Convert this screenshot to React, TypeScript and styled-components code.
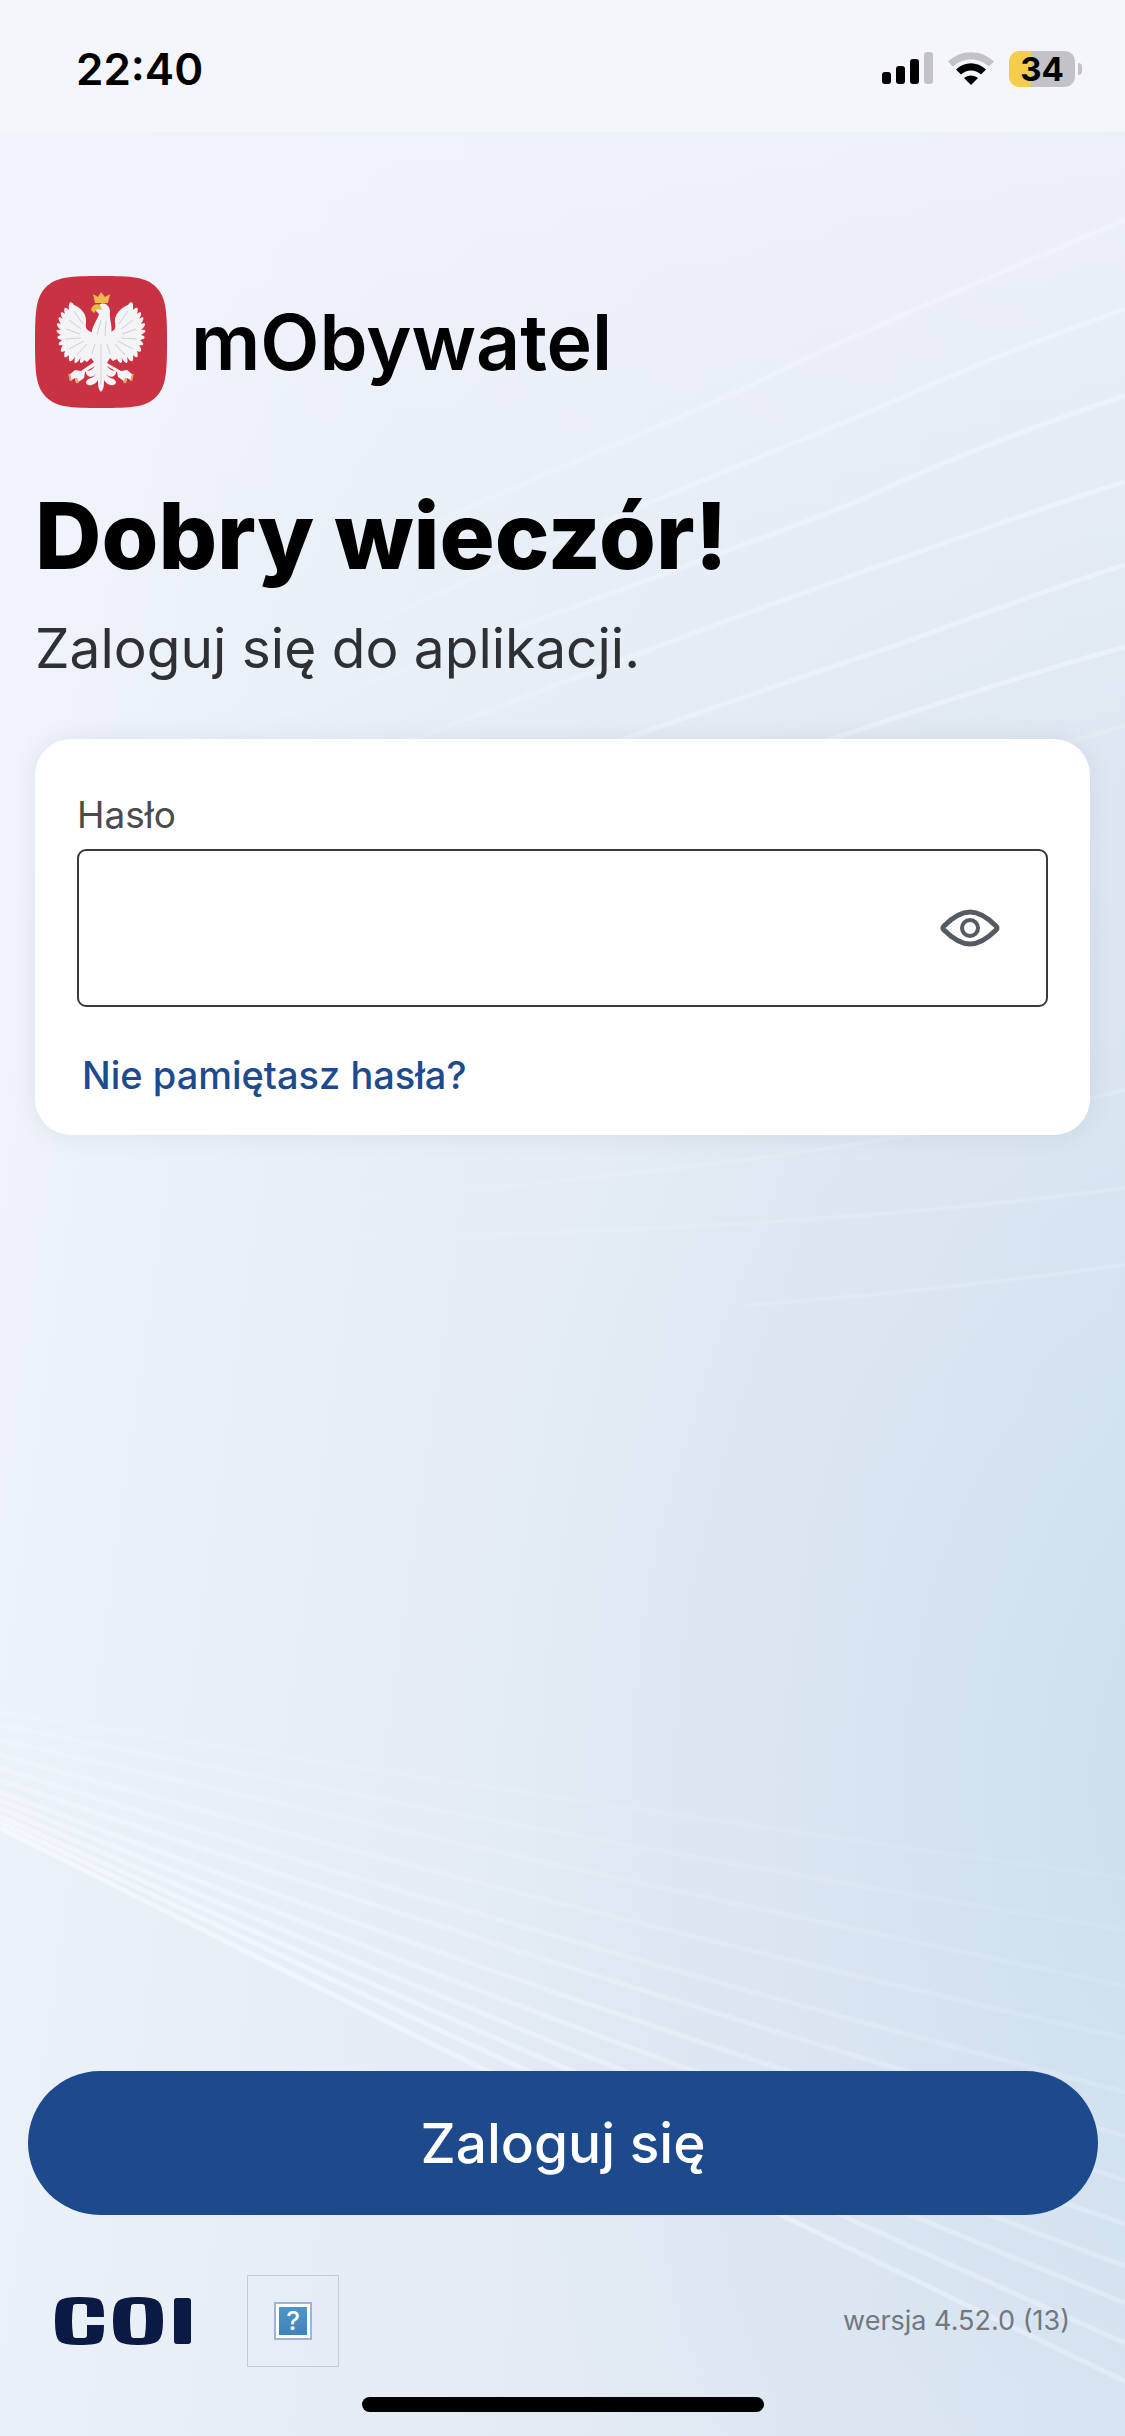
import React, { useState } from "react";
import styled, { createGlobalStyle } from "styled-components";

const GlobalStyle = createGlobalStyle`
  *, *::before, *::after { box-sizing: border-box; }
  html, body { margin: 0; padding: 0; }
  body {
    font-family: Inter, "Noto Sans", sans-serif;
    color: #000;
    -webkit-font-smoothing: antialiased;
  }
`;

const Screen = styled.div`
  position: relative;
  isolation: isolate;
  display: flex;
  flex-direction: column;
  min-height: 100vh;
  overflow: hidden;
  background:
    linear-gradient(180deg, rgba(240, 243, 251, 0.8) 5%, rgba(240, 243, 251, 0) 30%),
    radial-gradient(ellipse 76% 46% at 114% 73%, rgba(198, 219, 236, 0.85) 0%, rgba(206, 223, 238, 0.45) 50%, rgba(222, 232, 243, 0) 100%),
    linear-gradient(98deg, #f2f5fd 0%, #e9f0f8 28%, #e3eaf4 65%, #dce7f2 100%);
`;

const Backdrop = styled.svg`
  position: absolute;
  inset: 0;
  z-index: -1;
  width: 100%;
  height: 100%;
`;

const StatusBar = styled.header`
  display: flex;
  align-items: center;
  justify-content: space-between;
  height: 132px;
  padding: 6px 43px 0 76px;
  background: #f5f6fb;
`;

const Clock = styled.time`
  font-size: 44px;
  line-height: 52px;
  font-weight: 600;
`;

const Indicators = styled.div`
  display: flex;
  align-items: center;
  gap: 15px;
`;

const Battery = styled.div`
  display: flex;
  align-items: center;
  gap: 3px;
`;

const BatteryBody = styled.div<{ $level: number }>`
  width: 66px;
  height: 36px;
  border-radius: 10px;
  background: ${(p) => `linear-gradient(90deg, #f3cd4b ${p.$level}%, #c3c2c8 ${p.$level}%)`};
  font-size: 33px;
  line-height: 36px;
  font-weight: 700;
  text-align: center;
`;

const BatteryTip = styled.div`
  width: 4px;
  height: 12px;
  border-radius: 0 4px 4px 0;
  background: #c3c2c8;
`;

const Content = styled.main`
  display: flex;
  flex: 1;
  flex-direction: column;
  padding: 144px 35px 0;
`;

const Brand = styled.div`
  display: flex;
  align-items: center;
  gap: 24px;
`;

const BrandName = styled.span`
  font-size: 77px;
  line-height: 80px;
  font-weight: 600;
`;

const Greeting = styled.h1`
  margin: 72px 0 0;
  font-size: 92px;
  line-height: 112px;
  font-weight: 800;
`;

const Lead = styled.p`
  margin: 20px 0 0;
  color: #2f3033;
  font-size: 55px;
  line-height: 72px;
`;

const Card = styled.form`
  display: flex;
  flex-direction: column;
  align-items: flex-start;
  margin-top: 55px;
  padding: 54px 42px 38px;
  border-radius: 36px;
  background: #fff;
  box-shadow: 0 0 24px rgba(90, 90, 100, 0.1);
`;

const Label = styled.label`
  color: #4b4b4d;
  font-size: 37px;
  line-height: 44px;
`;

const Field = styled.div`
  display: flex;
  align-items: center;
  width: 100%;
  height: 158px;
  margin-top: 12px;
  padding: 0 40px 0 30px;
  border: 2px solid #3a3a3d;
  border-radius: 9px;
`;

const PasswordInput = styled.input`
  flex: 1;
  min-width: 0;
  height: 100%;
  padding: 0;
  border: 0;
  outline: 0;
  background: transparent;
  font: inherit;
  font-size: 44px;
`;

const IconButton = styled.button`
  display: flex;
  padding: 6px;
  border: 0;
  background: transparent;
  color: #555a63;
`;

const TextLink = styled.a`
  margin: 46px 0 0 5px;
  color: #1e4a8e;
  font-size: 38px;
  line-height: 44px;
  font-weight: 500;
  text-decoration: none;
`;

const Actions = styled.div`
  display: flex;
  padding: 0 27px 0 28px;
`;

const PrimaryButton = styled.button`
  flex: 1;
  height: 144px;
  border: 0;
  border-radius: 72px;
  background: #1d4a8d;
  color: #fff;
  font-family: inherit;
  font-size: 55px;
  font-weight: 500;
`;

const Footer = styled.footer`
  display: flex;
  align-items: center;
  gap: 56px;
  padding: 60px 55px 0;
`;

const MissingImage = styled.div`
  display: grid;
  place-items: center;
  width: 92px;
  height: 92px;
  border: 1px solid #c6cad6;
`;

const MissingGlyph = styled.span`
  width: 38px;
  height: 38px;
  border: 2px solid #9fb4d4;
  background: linear-gradient(#5099c8, #3f7fba);
  box-shadow: inset 0 0 0 3px #fff;
  color: #fff;
  font-size: 26px;
  line-height: 34px;
  font-weight: 500;
  text-align: center;
`;

const Version = styled.span`
  margin-left: auto;
  color: #74777e;
  font-size: 27px;
  line-height: 36px;
`;

const HomeIndicator = styled.div`
  align-self: center;
  width: 402px;
  height: 15px;
  margin: 30px 0 24px;
  border-radius: 8px;
  background: #000;
`;

const upperLines = [
  "M1125 220C1000 272 820 350 755 383S560 464 380 548",
  "M1125 309C1020 346 940 380 892 402S600 519 380 620",
  "M1125 396C1020 430 920 472 869 496S620 588 160 760",
  "M1125 482C1010 518 880 566 823 586S620 660 400 745",
  "M1125 565C1040 592 950 626 908 641S720 704 600 748",
  "M1125 647C1020 676 930 706 800 750",
];

const cardLines = [
  "M1125 726C1080 738 1060 745 1000 765",
  "M1125 1090C900 1150 600 1180 200 1215",
  "M1125 1188C900 1218 650 1232 359 1238",
  "M1125 1265C1000 1282 880 1296 746 1305",
];

// [left edge, middle, right edge] heights of every strand in the fan
const strands = [
  [1828, 2108, 2381],
  [1822, 2087, 2343],
  [1816, 2067, 2303],
  [1808, 2046, 2266],
  [1800, 2022, 2224],
  [1792, 1995, 2180],
  [1780, 1965, 2136],
  [1768, 1938, 2092],
  [1755, 1904, 2038],
  [1740, 1866, 1986],
  [1725, 1833, 1930],
  [1712, 1798, 1878],
];

function BackdropArt() {
  return (
    <Backdrop viewBox="0 0 1125 2436" preserveAspectRatio="none" fill="none" aria-hidden="true">
      <defs>
        <linearGradient id="fadeLeft" gradientUnits="userSpaceOnUse" x1="200" y1="0" x2="1125" y2="0">
          <stop offset="0" stopColor="#f3f8ff" stopOpacity="0" />
          <stop offset="0.5" stopColor="#f3f8ff" stopOpacity="0.4" />
          <stop offset="1" stopColor="#f3f8ff" stopOpacity="0.5" />
        </linearGradient>
        <linearGradient id="fadeRight" gradientUnits="userSpaceOnUse" x1="0" y1="0" x2="1125" y2="0">
          <stop offset="0" stopColor="#f7fafd" stopOpacity="0.8" />
          <stop offset="0.5" stopColor="#f0f6fe" stopOpacity="0.65" />
          <stop offset="1" stopColor="#edf4fc" stopOpacity="0.45" />
        </linearGradient>
      </defs>
      {upperLines.map((d) => (
        <path key={d} d={d} stroke="url(#fadeLeft)" strokeWidth="5" />
      ))}
      {cardLines.map((d) => (
        <path key={d} d={d} stroke="url(#fadeLeft)" strokeWidth="4" opacity="0.4" />
      ))}
      {strands.map(([a, b, c], i) => (
        <path
          key={a}
          d={`M0 ${a}Q562 ${2 * b - (a + c) / 2} 1125 ${c}`}
          stroke="url(#fadeRight)"
          strokeWidth="5"
          opacity={1 - i * 0.075}
        />
      ))}
    </Backdrop>
  );
}

function SignalIcon() {
  return (
    <svg width="51" height="34" viewBox="0 0 51 34" aria-label="Zasięg">
      <rect x="0" y="20" width="9" height="12" rx="3" />
      <rect x="14" y="14" width="9" height="18" rx="3" />
      <rect x="28" y="7" width="9" height="25" rx="3" />
      <rect x="42" y="0" width="9" height="32" rx="3" fill="#c3c2c8" />
    </svg>
  );
}

function WifiIcon() {
  return (
    <svg width="46" height="34" viewBox="0 0 46 34" aria-label="Wi-Fi">
      <path d="M0 9.500C13-3 33-3 46 9.500L41 14.500C31 5 15 5 5 14.500Z" fill="#c3c2c8" />
      <path d="M8 17.500C17 9 29 9 38 17.500L33 22.500C27 17 19 17 13 22.500Z" />
      <path d="M16 26C20 22.500 26 22.500 30 26L23 33Z" />
    </svg>
  );
}

function EagleLogo() {
  return (
    <svg width="132" height="132" viewBox="0 0 132 132" role="img" aria-label="Godło Polski">
      <path d="M66 0C97 0 111 1 121 11C131 21 132 35 132 66C132 97 131 111 121 121C111 131 97 132 66 132C35 132 21 131 11 121C1 111 0 97 0 66C0 35 1 21 11 11C21 1 35 0 66 0Z" fill="#c83243" />
      <g fill="#f4f4f6">
        <path d="M58 67L50 83C47 89 43 88 46 81C42 88 38 90 40 81C36 87 33 87 34 79C30 83 28 82 30 75C26 77 24 75 28 69C23 70 22 68 27 64C21 63 21 60 26 59C20 56 20 53 26 54C20 49 21 46 26 48C22 42 23 39 28 43C24 37 26 34 30 38C28 31 30 30 34 34C33 26 36 24 39 29C47 32 52 39 51 47C50 53 52 55 60 57Z" />
        <path d="M74 67L82 83C85 89 89 88 86 81C90 88 94 90 92 81C96 87 99 87 98 79C102 83 104 82 102 75C106 77 108 75 104 69C109 70 110 68 105 64C111 63 111 60 106 59C112 56 112 53 106 54C112 49 111 46 106 48C110 42 109 39 104 43C108 37 106 34 102 38C104 31 102 30 98 34C99 26 96 24 93 29C85 32 79 39 80 47C81 53 80 55 72 57Z" />
        <path d="M61 35C62 25 74 25 75 35C74 44 78 49 76 60L82 83L78 85L75 82L72 87L86 95L92 94L98 99L97 105L92 102L91 107L86 103L83 101L82 96L72 90C75 94 79 96 81 94C82 101 75 103 71 98C74 104 81 101 81 107C78 112 71 108 69 104C69 109 69 113 66 116C63 113 63 109 63 104C61 108 54 112 51 107C51 101 58 104 61 98C57 103 50 101 51 94C53 96 57 94 60 90L50 96L49 102L45 105L41 107L40 102L35 105L34 99L40 94L46 95L59 86L56 82L52 86L49 84L57 62C55 52 62 45 64 38Z" />
      </g>
      <path d="M39 35L48 48M34 44L46 53M31 53L45 58M30 63L46 62M34 73L49 65M42 79L52 68M93 35L84 48M98 44L86 53M101 53L87 58M102 63L86 62M98 73L83 65M90 79L80 68M66 68V109M60 68L57 78M72 68L75 78M66 44L62 59M71 45L70 60" stroke="#cfd0d8" strokeWidth="1" fill="none" />
      <path d="M58 18L63 21L66 16L70 21L75 18L73 27H60Z" fill="#efb84c" />
      <path d="M56 34C57 29 61 27 65 29L67 34L62 33L59 37Z" fill="#edb949" />
      <path d="M34 98L36 105M41 102L43 107M98 98L96 105M91 102L89 107" stroke="#e0a060" strokeWidth="2" />
    </svg>
  );
}

function EyeIcon() {
  return (
    <svg width="60" height="38" viewBox="0 0 60 38" fill="none" stroke="currentColor" strokeWidth="5" aria-hidden="true">
      <path d="M4 17C13 8 21 3 30 3S47 8 56 17Q58 19 56 21C47 30 39 35 30 35S13 30 4 21Q2 19 4 17Z" />
      <circle cx="30" cy="19" r="8" strokeWidth="4" />
    </svg>
  );
}

function CoiLogo() {
  return (
    <svg width="136" height="48" viewBox="0 0 136 48" fill="#0b1a45" fillRule="evenodd" role="img" aria-label="COI">
      <path d="M49 20H32V10Q32 7 29 7H21Q18 7 18 10Q16 24 18 38Q18 41 21 41H29Q32 41 32 38V28H49Q49 42 45 45Q42 48 24 48Q8 48 4 44Q0 40 0 24Q0 8 4 4Q8 0 24 0Q42 0 45 3Q49 6 49 20Z" />
      <path d="M83 0Q98 0 103 4Q108 8 108 24Q108 40 103 44Q98 48 83 48Q68 48 63 44Q58 40 58 24Q58 8 63 4Q68 0 83 0ZM79 7Q76 7 76 10Q74 24 76 38Q76 41 79 41H87Q90 41 90 38Q92 24 90 10Q90 7 87 7Z" />
      <rect x="119" y="1" width="17" height="46" rx="3" />
    </svg>
  );
}

export default function App() {
  const [visible, setVisible] = useState(false);
  return (
    <Screen>
      <GlobalStyle />
      <BackdropArt />
      <StatusBar>
        <Clock>22:40</Clock>
        <Indicators>
          <SignalIcon />
          <WifiIcon />
          <Battery>
            <BatteryBody $level={34}>34</BatteryBody>
            <BatteryTip />
          </Battery>
        </Indicators>
      </StatusBar>
      <Content>
        <Brand>
          <EagleLogo />
          <BrandName>mObywatel</BrandName>
        </Brand>
        <Greeting>Dobry wieczór!</Greeting>
        <Lead>Zaloguj się do aplikacji.</Lead>
        <Card onSubmit={(e) => e.preventDefault()}>
          <Label htmlFor="password">Hasło</Label>
          <Field>
            <PasswordInput id="password" type={visible ? "text" : "password"} />
            <IconButton type="button" aria-label="Pokaż hasło" onClick={() => setVisible(!visible)}>
              <EyeIcon />
            </IconButton>
          </Field>
          <TextLink href="#reset">Nie pamiętasz hasła?</TextLink>
        </Card>
      </Content>
      <Actions>
        <PrimaryButton type="button">Zaloguj się</PrimaryButton>
      </Actions>
      <Footer>
        <CoiLogo />
        <MissingImage>
          <MissingGlyph>?</MissingGlyph>
        </MissingImage>
        <Version>wersja 4.52.0 (13)</Version>
      </Footer>
      <HomeIndicator />
    </Screen>
  );
}
